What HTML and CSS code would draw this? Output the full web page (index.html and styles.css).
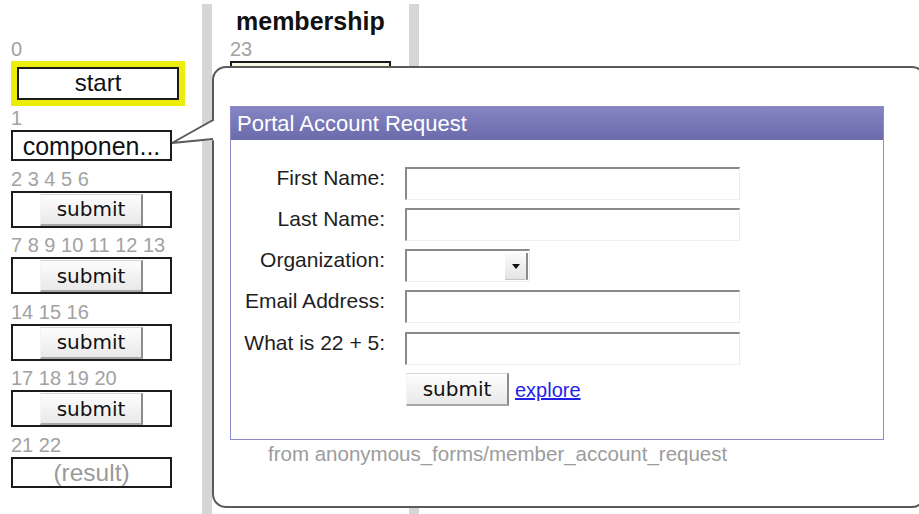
FILE: index.html
```html
<!DOCTYPE html>
<html lang="en">
<head>
<meta charset="utf-8">
<title>membership</title>
<link rel="stylesheet" href="styles.css">
</head>
<body>
<div class="page">
  <div class="steps">
    <div class="nums">0</div>
    <div class="sel"><div class="box start">start</div></div>
    <div class="nums">1</div>
    <div class="box comp">componen...</div>
    <div class="nums">2 3 4 5 6</div>
    <div class="box act"><button class="btn" type="button">submit</button></div>
    <div class="nums">7 8 9 10 11 12 13</div>
    <div class="box act"><button class="btn" type="button">submit</button></div>
    <div class="nums">14 15 16</div>
    <div class="box act"><button class="btn" type="button">submit</button></div>
    <div class="nums">17 18 19 20</div>
    <div class="box act"><button class="btn" type="button">submit</button></div>
    <div class="nums">21 22</div>
    <div class="box result">(result)</div>
  </div>
  <div class="bar"></div>
  <div class="lane">
    <h2 class="lane-title">membership</h2>
    <div class="nums">23</div>
    <div class="box lane-box"></div>
  </div>
  <div class="bar"></div>

  <div class="bubble">
    <svg class="tail" width="46" height="28" viewBox="0 0 46 28">
      <polygon points="47,3 2,27 47,24" fill="#fff"/>
      <polyline points="43,4 2,27 43,23" fill="none" stroke="#5a5a5a" stroke-width="2" stroke-linejoin="miter"/>
    </svg>
    <div class="panel">
      <div class="panel-head">Portal Account Request</div>
      <form class="panel-body">
        <label class="lbl">First Name:</label>
        <input class="field" type="text">
        <label class="lbl">Last Name:</label>
        <input class="field" type="text">
        <label class="lbl">Organization:</label>
        <div class="select"><span class="select-btn"><span class="caret"></span></span></div>
        <label class="lbl">Email Address:</label>
        <input class="field" type="text">
        <label class="lbl">What is 22 + 5:</label>
        <input class="field" type="text">
        <div class="actions">
          <button class="btn form-btn" type="button">submit</button>
          <a class="explore" href="#">explore</a>
        </div>
      </form>
    </div>
    <div class="source">from anonymous_forms/member_account_request</div>
  </div>
</div>
</body>
</html>
```

FILE: styles.css
```css
html, body {
  margin: 0;
  padding: 0;
  background: #fff;
  overflow: hidden;
}

body {
  font-family: "Liberation Sans", Arial, sans-serif;
  color: #111;
}

.page {
  position: relative;
  display: flex;
  height: 514px;
}

/* left column: numbered workflow steps */
.steps {
  width: 202px;
  flex-shrink: 0;
  box-sizing: border-box;
  padding: 38px 0 0 11px;
}

.nums {
  font-size: 20px;
  line-height: 22px;
  height: 22px;
  color: #a2a2a2;
  white-space: nowrap;
}

.box {
  width: 161px;
  box-sizing: border-box;
  border: 2px solid #1b1b1b;
  margin: 1px 0 6.5px;
  text-align: center;
  font-size: 24px;
  background: #fff;
}

.sel {
  width: 174px;
  box-sizing: border-box;
  border: 6px solid #eded0c;
  margin: 1px 0 1px;
}

.sel .box {
  width: 162px;
  height: 32.5px;
  margin: 0;
  line-height: 28px;
}

.comp {
  height: 31px;
  font-size: 25px;
  line-height: 26px;
  padding-top: 1px;
  margin-bottom: 7px;
}

.result {
  height: 31.5px;
  font-size: 24.5px;
  line-height: 26px;
  padding-top: 1px;
  color: #9a9a9a;
}

.act {
  height: 37px;
  display: flex;
  align-items: center;
  justify-content: center;
}

.btn {
  width: 103px;
  height: 32px;
  padding: 0;
  box-sizing: border-box;
  font-family: "DejaVu Sans", "Lucida Grande", sans-serif;
  font-size: 20px;
  color: #111;
  background: linear-gradient(#fdfdfd, #e9e9e9);
  border-top: 1px solid #d6d6d6;
  border-left: 1px solid #f4f4f4;
  border-right: 2px solid #8c8c8c;
  border-bottom: 2px solid #a8a8a8;
  border-radius: 0;
  cursor: pointer;
}

.act .btn {
  margin-top: 1px;
}

/* vertical separators between lanes */
.bar {
  width: 10px;
  flex-shrink: 0;
  margin-top: 4px;
  background: #d6d6d6;
}

/* membership lane */
.lane {
  width: 197px;
  flex-shrink: 0;
  box-sizing: border-box;
  padding-left: 18px;
}

.lane-title {
  margin: 7px 0 3px 6px;
  font-size: 25px;
  line-height: 28px;
  font-weight: bold;
  color: #111;
  white-space: nowrap;
}

.lane-box {
  height: 37px;
  background: #fafae4;
}

/* callout popup */
.bubble {
  position: absolute;
  left: 212px;
  top: 66px;
  width: 714px;
  height: 442px;
  box-sizing: border-box;
  border: 2px solid #5a5a5a;
  border-radius: 14px;
  background: #fff;
  z-index: 2;
}

.tail {
  position: absolute;
  left: -44px;
  top: 48px;
  overflow: visible;
}

.panel {
  margin: 38px 0 0 16px;
  width: 654px;
  box-sizing: border-box;
  border: 1px solid #8c8ccb;
}

.panel-head {
  height: 33px;
  line-height: 33px;
  padding-left: 6px;
  font-size: 22px;
  color: #fff;
  background: linear-gradient(#8585c4, #6b6bab);
}

.panel-body {
  display: grid;
  grid-template-columns: 154px 335px;
  column-gap: 20px;
  row-gap: 8.3px;
  padding: 26.5px 0 33.5px;
  margin: 0;
}

.lbl {
  text-align: right;
  font-size: 21px;
  line-height: 22px;
  color: #1e1e1e;
  white-space: nowrap;
}

.field {
  display: block;
  width: 335px;
  height: 33px;
  box-sizing: border-box;
  margin: 0;
  padding: 0 4px;
  background: #fff;
  border-top: 2.5px solid #8a8a8a;
  border-left: 2px solid #8a8a8a;
  border-right: 1px solid #ececec;
  border-bottom: 1px solid #f0f0f0;
  border-radius: 0;
  outline: none;
}

.select {
  width: 125px;
  height: 33px;
  box-sizing: border-box;
  display: flex;
  justify-content: flex-end;
  align-items: flex-start;
  border-top: 2.5px solid #8a8a8a;
  border-left: 2px solid #8a8a8a;
  border-right: 1px solid #ececec;
  border-bottom: 1px solid #f0f0f0;
}

.select-btn {
  width: 23px;
  height: 27px;
  margin: 1.5px 1px 0 0;
  box-sizing: border-box;
  display: flex;
  align-items: center;
  justify-content: center;
  background: linear-gradient(#fbfbfb, #e4e4e4);
  border-right: 2px solid #8a8a8a;
  border-bottom: 1px solid #c4c4c4;
}

.caret {
  width: 0;
  height: 0;
  border-left: 4.5px solid transparent;
  border-right: 4.5px solid transparent;
  border-top: 5px solid #111;
  margin-top: 1px;
}

.actions {
  grid-column: 2;
  display: flex;
  align-items: center;
}

.form-btn {
  height: 33px;
  margin-left: 1px;
}

.explore {
  margin: 3px 0 0 6px;
  font-size: 20px;
  color: #1f1fe8;
  text-decoration: underline;
}

.source {
  margin-top: 1.5px;
  padding-left: 54px;
  font-size: 20.5px;
  line-height: 24px;
  color: #9c9c9c;
  white-space: nowrap;
}
```
